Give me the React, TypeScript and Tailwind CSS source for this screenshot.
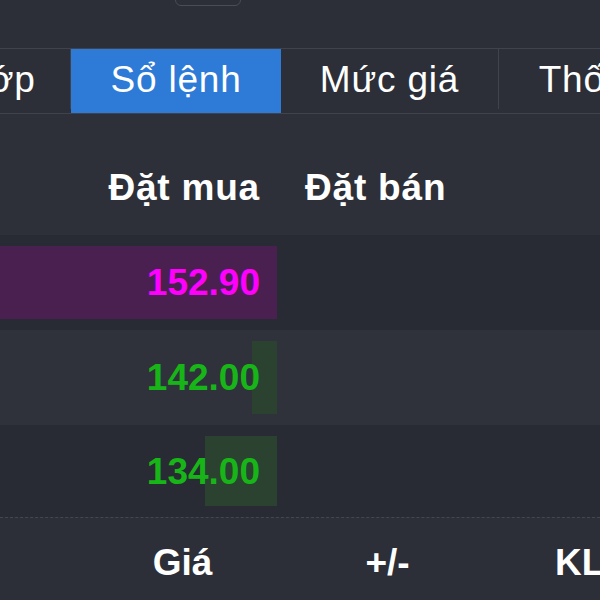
import React from "react";

const rows = [
  { price: "152.90", color: "text-[#ff00ff]", bar: "bg-[#4a2050]", barWidth: 277, bg: "bg-[#282b33]", h: "h-[95px]" },
  { price: "142.00", color: "text-[#18b518]", bar: "bg-[#2b4231]", barWidth: 25, bg: "bg-[#2f323b]", h: "h-[95px]" },
  { price: "134.00", color: "text-[#18b518]", bar: "bg-[#2b4231]", barWidth: 72, bg: "bg-[#282b33]", h: "h-[92px]" },
];

export default function App() {
  return (
    <div className="h-[600px] w-[600px] overflow-hidden bg-[#2c2f37] font-['Liberation_Sans',Arial,sans-serif] text-[37px] text-white">
      {/* top toolbar, mostly cut off */}
      <div className="h-[48px] overflow-hidden">
        <div className="-mt-[30px] ml-[175px] h-[36px] w-[66px] rounded-[6px] border border-[#4a4d56]" />
      </div>

      {/* tabs */}
      <div className="flex h-[66px] overflow-hidden border-y border-[#40434b] pb-[4px] leading-none tracking-[0.8px]">
        <div className="-ml-[92px] flex w-[163px] shrink-0 items-center justify-center border-r border-[#40434b]">
          Khớp
        </div>
        <div className="-mb-[4px] flex w-[210px] shrink-0 items-center justify-center bg-[#2e7ad7] pb-[4px]">
          Sổ lệnh
        </div>
        <div className="flex w-[218px] shrink-0 items-center justify-center border-r border-[#40434b]">
          Mức giá
        </div>
        <div className="flex w-[240px] shrink-0 items-center justify-center whitespace-nowrap">
          Thống kê
        </div>
      </div>

      {/* column header */}
      <div className="flex h-[121px] items-center bg-[#2d3039] pt-[25px] font-bold leading-none tracking-[0.8px]">
        <div className="w-[277px] shrink-0 pr-[17px] text-right">Đặt mua</div>
        <div className="pl-[28px]">Đặt bán</div>
      </div>

      {/* order book rows */}
      {rows.map((row, i) => (
        <div key={i} className={`flex items-center ${row.h} ${row.bg}`}>
          <div className="relative flex h-full w-[277px] shrink-0 items-center justify-end pr-[17px]">
            <div
              className={`absolute right-0 top-[11px] bottom-[11px] ${row.bar}`}
              style={{ width: row.barWidth }}
            />
            <span className={`relative font-bold leading-none ${row.color}`}>{row.price}</span>
          </div>
        </div>
      ))}

      {/* bottom header */}
      <div className="flex h-[83px] items-center overflow-hidden border-t border-dashed border-[#44474f] pt-[6px] font-bold leading-none">
        <div className="ml-[80px] w-[205px] shrink-0 text-center">Giá</div>
        <div className="w-[205px] shrink-0 text-center">+/-</div>
        <div className="shrink-0 whitespace-nowrap pl-[65px]">KL</div>
      </div>
    </div>
  );
}
